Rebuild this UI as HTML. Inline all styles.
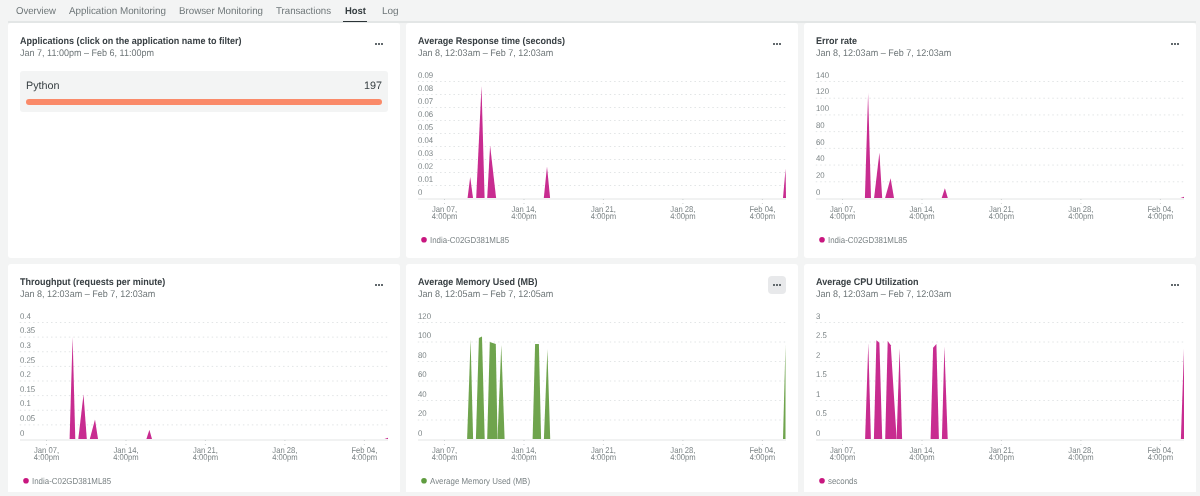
<!DOCTYPE html>
<html><head><meta charset="utf-8"><style>
html,body{margin:0;padding:0}
body{width:1200px;height:496px;overflow:hidden;background:#f3f4f4;position:relative;will-change:transform;text-rendering:geometricPrecision;font-family:"Liberation Sans",sans-serif}
.tab{position:absolute;top:5.8px;font-size:10px;line-height:12px;color:#6e7678;white-space:nowrap;transform-origin:0 0}
.tab.on{color:#353d40;font-weight:bold;font-size:9.75px;top:6.2px}
.tbl{position:absolute;left:8px;top:21px;width:1188px;height:2px;background:#e3e6e6}
.tul{position:absolute;left:343px;top:20.9px;width:24px;height:1.6px;background:#2b3337}
.card{position:absolute;width:392px;background:#fff;border-radius:3px 3px 0 0;overflow:hidden}
.tt{position:absolute;left:12px;top:13px;font-size:9.75px;line-height:11px;font-weight:bold;color:#394044;white-space:nowrap;transform:scaleX(0.925);transform-origin:0 0}
.st{position:absolute;left:12px;top:24.6px;font-size:9.6px;line-height:11px;color:#6e7678;white-space:nowrap;transform:scaleX(0.94);transform-origin:0 0}
.dots{position:absolute;left:362px;top:12px;width:18px;height:18px;border-radius:4px}
.dots.hv{background:#e8e9eb}
.dots i{position:absolute;top:8px;width:2px;height:2px;background:#62696d}
.dots i:nth-child(1){left:5px} .dots i:nth-child(2){left:8px} .dots i:nth-child(3){left:11px}
.ch{position:absolute;left:0;top:0}
.gd{stroke:#e2e5e6;stroke-width:1;stroke-dasharray:1.5 2.963}
.ax{stroke:#eceeee;stroke-width:1.5}
.tk{stroke:#cdd1d2;stroke-width:1;stroke-dasharray:1 3}
.yl{font-size:8.25px;fill:#7c8486}
.xl{font-size:8.5px;fill:#7c8486;text-anchor:middle}
.lg{font-size:8.7px;fill:#7c8486}
.app{position:absolute;left:12px;top:48px;width:368px;height:40.5px;background:#f3f4f4;border-radius:3px}
.an{position:absolute;left:6px;top:8.6px;font-size:10.8px;line-height:13px;color:#363e41}
.av{position:absolute;right:6px;top:8.6px;font-size:10.8px;line-height:13px;color:#363e41}
.bar{position:absolute;left:6px;top:28px;width:356px;height:6px;border-radius:3px;background:#fa8a69}
</style></head><body>
<span class="tab" style="left:16px;transform:scaleX(0.96)">Overview</span>
<span class="tab" style="left:69px;transform:scaleX(0.985)">Application Monitoring</span>
<span class="tab" style="left:179px;transform:scaleX(0.975)">Browser Monitoring</span>
<span class="tab" style="left:276px;transform:scaleX(0.967)">Transactions</span>
<span class="tab on" style="left:345px;transform:scaleX(0.97)">Host</span>
<span class="tab" style="left:382px;transform:scaleX(1.0)">Log</span>
<div class="tbl"></div><div class="tul"></div>
<div class="card" style="left:8px;top:23px;height:235px;border-radius:3px"><div class="tt">Applications (click on the application name to filter)</div><div class="st">Jan 7, 11:00pm – Feb 6, 11:00pm</div><div class="dots"><i></i><i></i><i></i></div><div class="app"><span class="an">Python</span><span class="av">197</span><div class="bar"></div></div></div>
<div class="card" style="left:406px;top:23px;height:235px;border-radius:3px"><div class="tt">Average Response time (seconds)</div><div class="st">Jan 8, 12:03am – Feb 7, 12:03am</div><div class="dots"><i></i><i></i><i></i></div><svg class="ch" width="392" height="235" viewBox="0 0 392 235"><line x1="11.75" x2="380" y1="58.50" y2="58.50" class="gd"/><text transform="translate(12,54.70) scale(0.946,1)" class="yl">0.09</text><line x1="11.75" x2="380" y1="71.50" y2="71.50" class="gd"/><text transform="translate(12,67.70) scale(0.946,1)" class="yl">0.08</text><line x1="11.75" x2="380" y1="84.50" y2="84.50" class="gd"/><text transform="translate(12,80.70) scale(0.946,1)" class="yl">0.07</text><line x1="11.75" x2="380" y1="97.50" y2="97.50" class="gd"/><text transform="translate(12,93.70) scale(0.946,1)" class="yl">0.06</text><line x1="11.75" x2="380" y1="110.50" y2="110.50" class="gd"/><text transform="translate(12,106.70) scale(0.946,1)" class="yl">0.05</text><line x1="11.75" x2="380" y1="123.50" y2="123.50" class="gd"/><text transform="translate(12,119.70) scale(0.946,1)" class="yl">0.04</text><line x1="11.75" x2="380" y1="136.50" y2="136.50" class="gd"/><text transform="translate(12,132.70) scale(0.946,1)" class="yl">0.03</text><line x1="11.75" x2="380" y1="149.50" y2="149.50" class="gd"/><text transform="translate(12,145.70) scale(0.946,1)" class="yl">0.02</text><line x1="11.75" x2="380" y1="162.50" y2="162.50" class="gd"/><text transform="translate(12,158.70) scale(0.946,1)" class="yl">0.01</text><text transform="translate(12,171.70) scale(0.946,1)" class="yl">0</text><line x1="12" x2="380" y1="175.90" y2="175.90" class="ax"/><line x1="38.5" x2="38.5" y1="176.0" y2="181.0" class="tk"/><text transform="translate(38.50,189) scale(0.9,1)" class="xl">Jan 07,</text><text transform="translate(38.50,196) scale(0.9,1)" class="xl">4:00pm</text><line x1="118.0" x2="118.0" y1="176.0" y2="181.0" class="tk"/><text transform="translate(117.97,189) scale(0.9,1)" class="xl">Jan 14,</text><text transform="translate(117.97,196) scale(0.9,1)" class="xl">4:00pm</text><line x1="197.4" x2="197.4" y1="176.0" y2="181.0" class="tk"/><text transform="translate(197.44,189) scale(0.9,1)" class="xl">Jan 21,</text><text transform="translate(197.44,196) scale(0.9,1)" class="xl">4:00pm</text><line x1="276.9" x2="276.9" y1="176.0" y2="181.0" class="tk"/><text transform="translate(276.91,189) scale(0.9,1)" class="xl">Jan 28,</text><text transform="translate(276.91,196) scale(0.9,1)" class="xl">4:00pm</text><line x1="356.4" x2="356.4" y1="176.0" y2="181.0" class="tk"/><text transform="translate(356.38,189) scale(0.9,1)" class="xl">Feb 04,</text><text transform="translate(356.38,196) scale(0.9,1)" class="xl">4:00pm</text><path d="M61.60,174.90 L64.20,153.90 L67.00,174.90Z" fill="#c82c90"/><path d="M70.20,174.90 L75.50,63.00 L78.60,174.90Z" fill="#c82c90"/><path d="M81.20,174.90 L84.10,122.50 L90.10,174.90Z" fill="#c82c90"/><path d="M137.80,174.90 L141.00,143.40 L144.10,174.90Z" fill="#c82c90"/><path d="M377.00,174.90 L379.60,145.70 L380.00,174.90Z" fill="#c82c90"/><circle cx="18" cy="216.8" r="2.8" fill="#c8167f"/><text transform="translate(24,219.8) scale(0.91,1)" class="lg">India-C02GD381ML85</text></svg></div>
<div class="card" style="left:804px;top:23px;height:235px;border-radius:3px"><div class="tt">Error rate</div><div class="st">Jan 8, 12:03am – Feb 7, 12:03am</div><div class="dots"><i></i><i></i><i></i></div><svg class="ch" width="392" height="235" viewBox="0 0 392 235"><line x1="11.75" x2="380" y1="58.50" y2="58.50" class="gd"/><text transform="translate(12,54.70) scale(0.946,1)" class="yl">140</text><line x1="11.75" x2="380" y1="75.21" y2="75.21" class="gd"/><text transform="translate(12,71.41) scale(0.946,1)" class="yl">120</text><line x1="11.75" x2="380" y1="91.93" y2="91.93" class="gd"/><text transform="translate(12,88.13) scale(0.946,1)" class="yl">100</text><line x1="11.75" x2="380" y1="108.64" y2="108.64" class="gd"/><text transform="translate(12,104.84) scale(0.946,1)" class="yl">80</text><line x1="11.75" x2="380" y1="125.36" y2="125.36" class="gd"/><text transform="translate(12,121.56) scale(0.946,1)" class="yl">60</text><line x1="11.75" x2="380" y1="142.07" y2="142.07" class="gd"/><text transform="translate(12,138.27) scale(0.946,1)" class="yl">40</text><line x1="11.75" x2="380" y1="158.79" y2="158.79" class="gd"/><text transform="translate(12,154.99) scale(0.946,1)" class="yl">20</text><text transform="translate(12,171.70) scale(0.946,1)" class="yl">0</text><line x1="12" x2="380" y1="175.90" y2="175.90" class="ax"/><line x1="38.5" x2="38.5" y1="176.0" y2="181.0" class="tk"/><text transform="translate(38.50,189) scale(0.9,1)" class="xl">Jan 07,</text><text transform="translate(38.50,196) scale(0.9,1)" class="xl">4:00pm</text><line x1="118.0" x2="118.0" y1="176.0" y2="181.0" class="tk"/><text transform="translate(117.97,189) scale(0.9,1)" class="xl">Jan 14,</text><text transform="translate(117.97,196) scale(0.9,1)" class="xl">4:00pm</text><line x1="197.4" x2="197.4" y1="176.0" y2="181.0" class="tk"/><text transform="translate(197.44,189) scale(0.9,1)" class="xl">Jan 21,</text><text transform="translate(197.44,196) scale(0.9,1)" class="xl">4:00pm</text><line x1="276.9" x2="276.9" y1="176.0" y2="181.0" class="tk"/><text transform="translate(276.91,189) scale(0.9,1)" class="xl">Jan 28,</text><text transform="translate(276.91,196) scale(0.9,1)" class="xl">4:00pm</text><line x1="356.4" x2="356.4" y1="176.0" y2="181.0" class="tk"/><text transform="translate(356.38,189) scale(0.9,1)" class="xl">Feb 04,</text><text transform="translate(356.38,196) scale(0.9,1)" class="xl">4:00pm</text><path d="M60.90,174.90 L64.10,70.00 L67.00,174.90Z" fill="#c82c90"/><path d="M70.10,174.90 L75.40,129.80 L78.20,174.90Z" fill="#c82c90"/><path d="M81.10,174.90 L86.60,155.20 L90.00,174.90Z" fill="#c82c90"/><path d="M137.70,174.90 L140.90,165.20 L143.80,174.90Z" fill="#c82c90"/><path d="M376.50,174.90 L380.00,173.70 L380.00,174.90Z" fill="#c82c90"/><circle cx="18" cy="216.8" r="2.8" fill="#c8167f"/><text transform="translate(24,219.8) scale(0.91,1)" class="lg">India-C02GD381ML85</text></svg></div>
<div class="card" style="left:8px;top:264px;height:228px;border-radius:3px 3px 0 0"><div class="tt">Throughput (requests per minute)</div><div class="st">Jan 8, 12:03am – Feb 7, 12:03am</div><div class="dots"><i></i><i></i><i></i></div><svg class="ch" width="392" height="235" viewBox="0 0 392 235"><line x1="11.75" x2="380" y1="58.50" y2="58.50" class="gd"/><text transform="translate(12,54.70) scale(0.946,1)" class="yl">0.4</text><line x1="11.75" x2="380" y1="73.12" y2="73.12" class="gd"/><text transform="translate(12,69.33) scale(0.946,1)" class="yl">0.35</text><line x1="11.75" x2="380" y1="87.75" y2="87.75" class="gd"/><text transform="translate(12,83.95) scale(0.946,1)" class="yl">0.3</text><line x1="11.75" x2="380" y1="102.38" y2="102.38" class="gd"/><text transform="translate(12,98.58) scale(0.946,1)" class="yl">0.25</text><line x1="11.75" x2="380" y1="117.00" y2="117.00" class="gd"/><text transform="translate(12,113.20) scale(0.946,1)" class="yl">0.2</text><line x1="11.75" x2="380" y1="131.62" y2="131.62" class="gd"/><text transform="translate(12,127.83) scale(0.946,1)" class="yl">0.15</text><line x1="11.75" x2="380" y1="146.25" y2="146.25" class="gd"/><text transform="translate(12,142.45) scale(0.946,1)" class="yl">0.1</text><line x1="11.75" x2="380" y1="160.88" y2="160.88" class="gd"/><text transform="translate(12,157.07) scale(0.946,1)" class="yl">0.05</text><text transform="translate(12,171.70) scale(0.946,1)" class="yl">0</text><line x1="12" x2="380" y1="175.90" y2="175.90" class="ax"/><line x1="38.5" x2="38.5" y1="176.0" y2="181.0" class="tk"/><text transform="translate(38.50,189) scale(0.9,1)" class="xl">Jan 07,</text><text transform="translate(38.50,196) scale(0.9,1)" class="xl">4:00pm</text><line x1="118.0" x2="118.0" y1="176.0" y2="181.0" class="tk"/><text transform="translate(117.97,189) scale(0.9,1)" class="xl">Jan 14,</text><text transform="translate(117.97,196) scale(0.9,1)" class="xl">4:00pm</text><line x1="197.4" x2="197.4" y1="176.0" y2="181.0" class="tk"/><text transform="translate(197.44,189) scale(0.9,1)" class="xl">Jan 21,</text><text transform="translate(197.44,196) scale(0.9,1)" class="xl">4:00pm</text><line x1="276.9" x2="276.9" y1="176.0" y2="181.0" class="tk"/><text transform="translate(276.91,189) scale(0.9,1)" class="xl">Jan 28,</text><text transform="translate(276.91,196) scale(0.9,1)" class="xl">4:00pm</text><line x1="356.4" x2="356.4" y1="176.0" y2="181.0" class="tk"/><text transform="translate(356.38,189) scale(0.9,1)" class="xl">Feb 04,</text><text transform="translate(356.38,196) scale(0.9,1)" class="xl">4:00pm</text><path d="M61.60,174.90 L64.60,72.90 L67.30,174.90Z" fill="#c82c90"/><path d="M70.30,174.90 L75.50,130.60 L78.80,174.90Z" fill="#c82c90"/><path d="M81.80,174.90 L87.00,155.40 L90.00,174.90Z" fill="#c82c90"/><path d="M138.40,174.90 L141.40,165.70 L144.00,174.90Z" fill="#c82c90"/><path d="M376.50,174.90 L380.00,173.70 L380.00,174.90Z" fill="#c82c90"/><circle cx="18" cy="216.8" r="2.8" fill="#c8167f"/><text transform="translate(24,219.8) scale(0.91,1)" class="lg">India-C02GD381ML85</text></svg></div>
<div class="card" style="left:406px;top:264px;height:228px;border-radius:3px 3px 0 0"><div class="tt">Average Memory Used (MB)</div><div class="st">Jan 8, 12:05am – Feb 7, 12:05am</div><div class="dots hv"><i></i><i></i><i></i></div><svg class="ch" width="392" height="235" viewBox="0 0 392 235"><line x1="11.75" x2="380" y1="58.50" y2="58.50" class="gd"/><text transform="translate(12,54.70) scale(0.946,1)" class="yl">120</text><line x1="11.75" x2="380" y1="78.00" y2="78.00" class="gd"/><text transform="translate(12,74.20) scale(0.946,1)" class="yl">100</text><line x1="11.75" x2="380" y1="97.50" y2="97.50" class="gd"/><text transform="translate(12,93.70) scale(0.946,1)" class="yl">80</text><line x1="11.75" x2="380" y1="117.00" y2="117.00" class="gd"/><text transform="translate(12,113.20) scale(0.946,1)" class="yl">60</text><line x1="11.75" x2="380" y1="136.50" y2="136.50" class="gd"/><text transform="translate(12,132.70) scale(0.946,1)" class="yl">40</text><line x1="11.75" x2="380" y1="156.00" y2="156.00" class="gd"/><text transform="translate(12,152.20) scale(0.946,1)" class="yl">20</text><text transform="translate(12,171.70) scale(0.946,1)" class="yl">0</text><line x1="12" x2="380" y1="175.90" y2="175.90" class="ax"/><line x1="38.5" x2="38.5" y1="176.0" y2="181.0" class="tk"/><text transform="translate(38.50,189) scale(0.9,1)" class="xl">Jan 07,</text><text transform="translate(38.50,196) scale(0.9,1)" class="xl">4:00pm</text><line x1="118.0" x2="118.0" y1="176.0" y2="181.0" class="tk"/><text transform="translate(117.97,189) scale(0.9,1)" class="xl">Jan 14,</text><text transform="translate(117.97,196) scale(0.9,1)" class="xl">4:00pm</text><line x1="197.4" x2="197.4" y1="176.0" y2="181.0" class="tk"/><text transform="translate(197.44,189) scale(0.9,1)" class="xl">Jan 21,</text><text transform="translate(197.44,196) scale(0.9,1)" class="xl">4:00pm</text><line x1="276.9" x2="276.9" y1="176.0" y2="181.0" class="tk"/><text transform="translate(276.91,189) scale(0.9,1)" class="xl">Jan 28,</text><text transform="translate(276.91,196) scale(0.9,1)" class="xl">4:00pm</text><line x1="356.4" x2="356.4" y1="176.0" y2="181.0" class="tk"/><text transform="translate(356.38,189) scale(0.9,1)" class="xl">Feb 04,</text><text transform="translate(356.38,196) scale(0.9,1)" class="xl">4:00pm</text><path d="M61.10,174.90 L64.60,75.60 L67.10,174.90Z" fill="#6fa44d"/><path d="M69.90,174.90 L72.90,74.00 L76.00,72.40 L78.70,174.90Z" fill="#6fa44d"/><path d="M81.20,174.90 L83.80,77.90 L89.80,79.90 L91.50,174.90Z" fill="#6fa44d"/><path d="M91.50,174.90 L95.30,80.70 L98.60,174.90Z" fill="#6fa44d"/><path d="M126.60,174.90 L129.10,79.90 L132.90,80.00 L135.10,174.90Z" fill="#6fa44d"/><path d="M137.90,174.90 L141.40,85.00 L144.20,174.90Z" fill="#6fa44d"/><path d="M377.00,174.90 L379.50,80.50 L379.50,174.90Z" fill="#6fa44d"/><circle cx="18" cy="216.8" r="2.8" fill="#5f9c3f"/><text transform="translate(24,219.8) scale(0.91,1)" class="lg">Average Memory Used (MB)</text></svg></div>
<div class="card" style="left:804px;top:264px;height:228px;border-radius:3px 3px 0 0"><div class="tt">Average CPU Utilization</div><div class="st">Jan 8, 12:03am – Feb 7, 12:03am</div><div class="dots"><i></i><i></i><i></i></div><svg class="ch" width="392" height="235" viewBox="0 0 392 235"><line x1="11.75" x2="380" y1="58.50" y2="58.50" class="gd"/><text transform="translate(12,54.70) scale(0.946,1)" class="yl">3</text><line x1="11.75" x2="380" y1="78.00" y2="78.00" class="gd"/><text transform="translate(12,74.20) scale(0.946,1)" class="yl">2.5</text><line x1="11.75" x2="380" y1="97.50" y2="97.50" class="gd"/><text transform="translate(12,93.70) scale(0.946,1)" class="yl">2</text><line x1="11.75" x2="380" y1="117.00" y2="117.00" class="gd"/><text transform="translate(12,113.20) scale(0.946,1)" class="yl">1.5</text><line x1="11.75" x2="380" y1="136.50" y2="136.50" class="gd"/><text transform="translate(12,132.70) scale(0.946,1)" class="yl">1</text><line x1="11.75" x2="380" y1="156.00" y2="156.00" class="gd"/><text transform="translate(12,152.20) scale(0.946,1)" class="yl">0.5</text><text transform="translate(12,171.70) scale(0.946,1)" class="yl">0</text><line x1="12" x2="380" y1="175.90" y2="175.90" class="ax"/><line x1="38.5" x2="38.5" y1="176.0" y2="181.0" class="tk"/><text transform="translate(38.50,189) scale(0.9,1)" class="xl">Jan 07,</text><text transform="translate(38.50,196) scale(0.9,1)" class="xl">4:00pm</text><line x1="118.0" x2="118.0" y1="176.0" y2="181.0" class="tk"/><text transform="translate(117.97,189) scale(0.9,1)" class="xl">Jan 14,</text><text transform="translate(117.97,196) scale(0.9,1)" class="xl">4:00pm</text><line x1="197.4" x2="197.4" y1="176.0" y2="181.0" class="tk"/><text transform="translate(197.44,189) scale(0.9,1)" class="xl">Jan 21,</text><text transform="translate(197.44,196) scale(0.9,1)" class="xl">4:00pm</text><line x1="276.9" x2="276.9" y1="176.0" y2="181.0" class="tk"/><text transform="translate(276.91,189) scale(0.9,1)" class="xl">Jan 28,</text><text transform="translate(276.91,196) scale(0.9,1)" class="xl">4:00pm</text><line x1="356.4" x2="356.4" y1="176.0" y2="181.0" class="tk"/><text transform="translate(356.38,189) scale(0.9,1)" class="xl">Feb 04,</text><text transform="translate(356.38,196) scale(0.9,1)" class="xl">4:00pm</text><path d="M61.10,174.90 L64.30,79.20 L66.90,174.90Z" fill="#c82c90"/><path d="M69.90,174.90 L72.40,76.20 L75.40,78.70 L78.20,174.90Z" fill="#c82c90"/><path d="M81.20,174.90 L83.70,76.90 L86.80,81.20 L92.60,174.90Z" fill="#c82c90"/><path d="M92.60,174.90 L95.60,84.20 L98.10,174.90Z" fill="#c82c90"/><path d="M126.60,174.90 L129.10,83.70 L132.40,79.90 L134.90,174.90Z" fill="#c82c90"/><path d="M137.90,174.90 L140.40,82.40 L143.70,174.90Z" fill="#c82c90"/><path d="M376.90,174.90 L380.00,84.80 L380.00,174.90Z" fill="#c82c90"/><circle cx="18" cy="216.8" r="2.8" fill="#c8167f"/><text transform="translate(24,219.8) scale(0.91,1)" class="lg">seconds</text></svg></div>
</body></html>
